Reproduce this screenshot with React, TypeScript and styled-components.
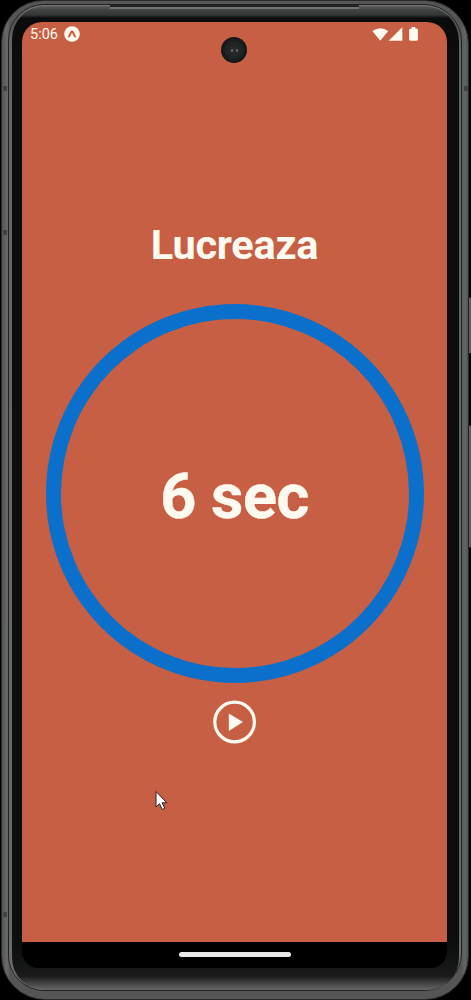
import React from "react";
import styled, { createGlobalStyle } from "styled-components";

const GlobalStyle = createGlobalStyle`
  * { box-sizing: border-box; }
  body { margin: 0; background: #000; font-family: Roboto, "Liberation Sans", sans-serif; }
`;

const Stage = styled.main`
  position: relative;
  width: 471px;
  height: 1000px;
  padding: 0 2px 0 1px;
  background: #000;
  overflow: hidden;
`;

const Frame = styled.div`
  height: 1000px;
  padding: 3px 6px 8px 6px;
  border-radius: 42px 44px 44px 44px;
  border: 1px solid #292b2b;
  background: linear-gradient(90deg, #555 0, #696969 5px, #555 8px, #555 459px, #626866 463px, #505453 100%);
`;

const Rim = styled.div`
  height: 100%;
  padding: 1px 2px 0 3px;
  border: 1px solid #202222;
  border-radius: 36px 38px 38px 36px;
  background: linear-gradient(180deg, #777 0, #555 14px, #656565 40px, #656a68 930px, #777 100%);
`;

const Bezel = styled.div`
  height: 100%;
  padding: 16px 11px 0 10px;
  border-radius: 33px 35px 32px 32px;
  background: linear-gradient(
    180deg,
    #5b5d5d 0, #414343 4px, #343636 9px, #0a0b0b 12px, #0a0b0a 18px,
    #0b0e0b 60px, #0b0e0b 935px, #161717 963px, #1a1a1a 970px,
    #3c3c3c 976px, #666 984px, #747474 100%
  );
`;

const Display = styled.section`
  display: flex;
  flex-direction: column;
  width: 425px;
  height: 946px;
  border-radius: 20px 20px 16px 16px;
  overflow: hidden;
  background: #000;
`;

const Screen = styled.div`
  display: flex;
  flex-direction: column;
  align-items: center;
  height: 920px;
  flex: none;
  background: #c65f44;
  color: #fffaf0;
`;

const StatusBar = styled.header`
  display: flex;
  align-items: center;
  justify-content: space-between;
  width: 100%;
  height: 24px;
  padding: 0 28px 0 8px;
`;

const StatusGroup = styled.div`
  display: flex;
  align-items: center;
  gap: 6px;
`;

const Clock = styled.span`
  font-size: 14.5px;
  line-height: 25px;
`;

const Title = styled.h1`
  margin: 174px 0 0;
  height: 50px;
  font-size: 41.5px;
  line-height: 50px;
  font-weight: 700;
  letter-spacing: -0.25px;
  white-space: nowrap;
`;

const Ring = styled.div`
  display: flex;
  align-items: center;
  justify-content: center;
  width: 378px;
  height: 379px;
  margin-top: 34px;
  border: 15.5px solid #0b70cb;
  border-radius: 50%;
`;

const Remaining = styled.span`
  padding-top: 7px;
  font-size: 63px;
  line-height: 72px;
  font-weight: 700;
  letter-spacing: -0.5px;
  white-space: nowrap;
  -webkit-text-stroke: 0.4px currentColor;
`;

const PlayButton = styled.button`
  display: block;
  width: 44px;
  height: 44px;
  margin: 17px 0 0;
  padding: 0;
  border: 0;
  background: none;
  color: inherit;
  svg { display: block; }
`;

const NavigationBar = styled.footer`
  display: flex;
  justify-content: center;
  padding-top: 10px;
`;

const HomeHandle = styled.div`
  width: 112px;
  height: 5px;
  border-radius: 3px;
  background: #e7e9e8;
`;

const Camera = styled.div`
  position: absolute;
  top: 37px;
  left: 221px;
  display: flex;
  align-items: center;
  justify-content: center;
  gap: 3px;
  width: 26px;
  height: 26px;
  border-radius: 50%;
  background: radial-gradient(circle, #292c2c 0, #202323 45%, #151717 65%, #202222 100%);
`;

const Lens = styled.i`
  width: 2px;
  height: 3px;
  border-radius: 1px;
  background: #666b69;
`;

const Speaker = styled.div`
  position: absolute;
  top: 5px;
  left: 110px;
  width: 249px;
  height: 4px;
  border-top: 2px solid #222;
  background: #737373;
`;

const SideKey = styled.div<{ $top: number; $height: number }>`
  position: absolute;
  right: 0;
  top: ${(p) => p.$top}px;
  width: 3px;
  height: ${(p) => p.$height}px;
  border: solid #202222;
  border-width: 1px 0 1px 1px;
  background: #5c5e60;
`;

const AntennaMark = styled.div<{ $top: number; $side: "left" | "right" }>`
  position: absolute;
  ${(p) => p.$side}: 3px;
  top: ${(p) => p.$top}px;
  width: 4px;
  height: 5px;
  background: #414343;
`;

const Pointer = styled.svg`
  position: absolute;
  left: 155px;
  top: 790px;
`;

export default function App() {
  return (
    <>
      <GlobalStyle />
      <Stage>
        <Frame>
          <Rim>
            <Bezel>
              <Display>
                <Screen>
                  <StatusBar>
                    <StatusGroup>
                      <Clock>5:06</Clock>
                      <svg width="16" height="16" viewBox="0 0 16 16">
                        <circle cx="8" cy="8" r="7.8" fill="#fffaf0" />
                        <path d="M5 10.5C6.2 9 7 5.2 8 5.2S9.8 9 11 10.5" fill="none" stroke="#c65f44" strokeWidth="2" strokeLinecap="round" strokeLinejoin="round" />
                      </svg>
                    </StatusGroup>
                    <svg width="47" height="16" viewBox="0 0 47 16" fill="#fffaf0">
                      <path d="M0.4 5Q8.3-0.6 16.2 5L8.3 14.8Z" />
                      <path d="M30.3 1.2V14.8H16.7Z" />
                      <path d="M39.7 1h3.6v1.4h1a1.6 1.6 0 0 1 1.6 1.6v9.2a1.6 1.6 0 0 1-1.6 1.6h-5.6a1.6 1.6 0 0 1-1.6-1.6V4a1.6 1.6 0 0 1 1.6-1.6h1z" />
                    </svg>
                  </StatusBar>
                  <Title>Lucreaza</Title>
                  <Ring>
                    <Remaining>6 sec</Remaining>
                  </Ring>
                  <PlayButton aria-label="Play">
                    <svg width="44" height="44" viewBox="0 0 44 44">
                      <circle cx="21.6" cy="22" r="19.8" fill="none" stroke="currentColor" strokeWidth="3.2" />
                      <path d="M15.8 13.4L30 22L15.8 31Z" fill="currentColor" />
                    </svg>
                  </PlayButton>
                </Screen>
                <NavigationBar>
                  <HomeHandle />
                </NavigationBar>
              </Display>
            </Bezel>
          </Rim>
        </Frame>
        <Speaker />
        <Camera>
          <Lens />
          <Lens />
        </Camera>
        <AntennaMark $side="left" $top={86} />
        <AntennaMark $side="left" $top={230} />
        <AntennaMark $side="left" $top={912} />
        <AntennaMark $side="right" $top={86} />
        <SideKey $top={297} $height={57} />
        <SideKey $top={425} $height={123} />
        <Pointer width="13" height="21" viewBox="0 0 13 21">
          <path d="M1 1.5V17L4.5 13.7L7.2 19.5L9.8 18.2L7.2 12.8H11.8Z" fill="#fff" stroke="#292323" strokeWidth="1" />
        </Pointer>
      </Stage>
    </>
  );
}
